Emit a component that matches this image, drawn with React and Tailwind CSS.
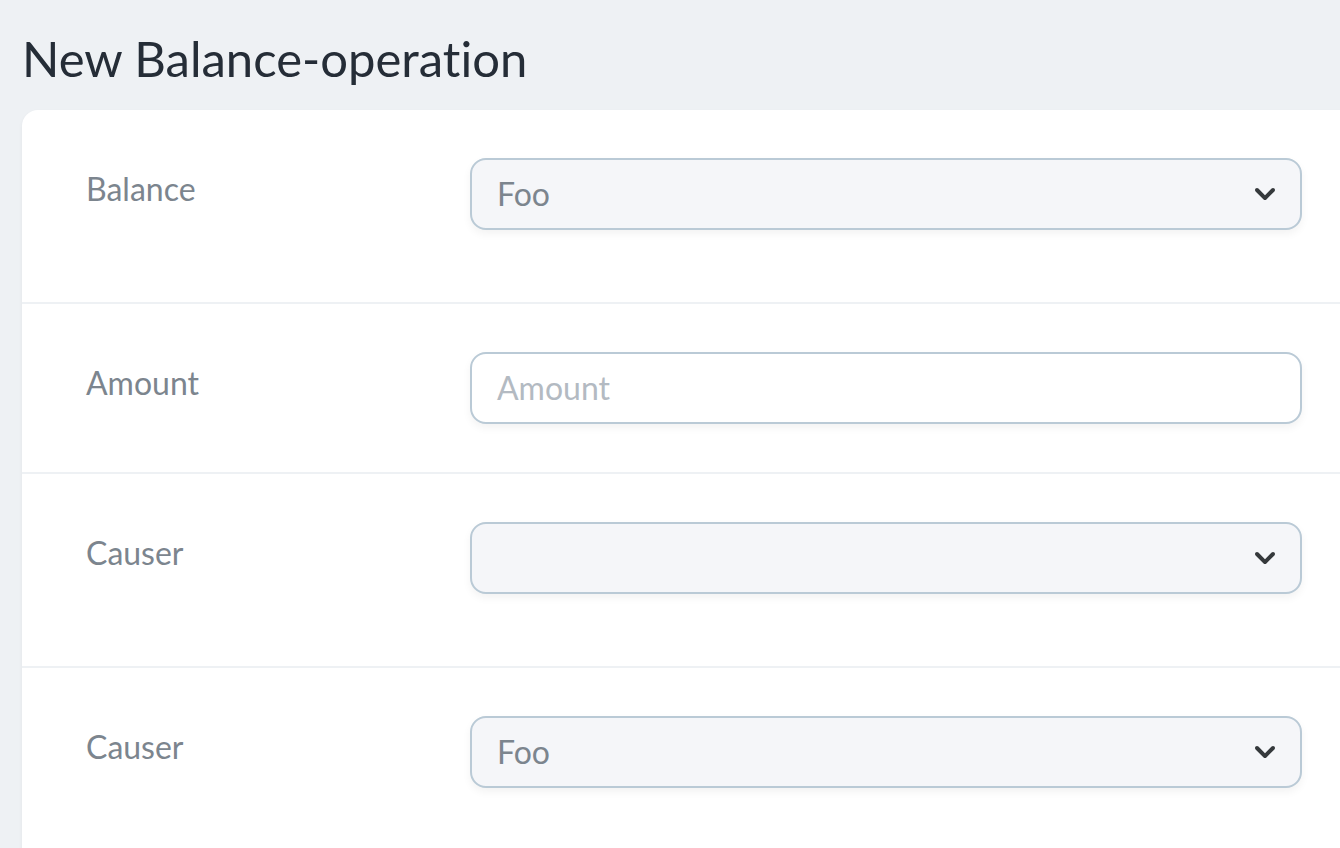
import React from "react";

const font = { fontFamily: "Lato, 'Noto Sans', sans-serif" };

function Chevron() {
  return (
    <svg width="20" height="12" viewBox="0 0 10 6" className="absolute right-[25px] top-1/2 -translate-y-1/2 text-[#35393c]">
      <path
        fill="currentColor"
        d="M8.292893.292893c.390525-.390524 1.023689-.390524 1.414214 0 .390524.390525.390524 1.023689 0 1.414214l-4 4c-.390525.390524-1.023689.390524-1.414214 0l-4-4c-.390524-.390525-.390524-1.023689 0-1.414214.390525-.390524 1.023689-.390524 1.414214 0L5 3.585786 8.292893.292893z"
      />
    </svg>
  );
}

function SelectBox({ value }) {
  return (
    <div className="relative h-[72px] w-full rounded-2xl border-2 border-[#bacad6] bg-[#f5f6f9] shadow-[0_4px_8px_rgba(0,0,0,0.05)] flex items-center pl-[25px] text-[32px] text-[#7c858e]">
      <span>{value}</span>
      <Chevron />
    </div>
  );
}

function InputBox({ placeholder }) {
  return (
    <div className="h-[72px] w-full rounded-2xl border-2 border-[#bacad6] bg-white shadow-[0_4px_8px_rgba(0,0,0,0.05)] flex items-center pl-[25px] text-[32px] text-[#b3bac2]">
      <span>{placeholder}</span>
    </div>
  );
}

function Row({ label, children, bottom, first }) {
  return (
    <div className={`flex ${first ? "" : "border-t-2 border-[#eef1f4]"}`}>
      <div className="w-[384px] px-16 pt-[59px]">
        <span className="text-[32px] leading-tight text-[#7c858e]">{label}</span>
      </div>
      <div className={`w-[960px] px-16 pt-12 ${bottom}`}>{children}</div>
    </div>
  );
}

export default function App() {
  return (
    <div className="h-[848px] w-[1340px] overflow-hidden bg-[#eef1f4] [font-variant-ligatures:none]" style={font}>
      <div className="pl-[22px] pt-[28px]">
        <h1 className="text-[49px] leading-[60px] font-normal text-[#252d37] h-[82px]">New Balance-operation</h1>
        <div className="w-[1920px] h-[800px] rounded-tl-2xl bg-white shadow-[0_2px_4px_rgba(0,0,0,0.05)]">
          <Row label="Balance" bottom="pb-[72px]" first>
            <SelectBox value="Foo" />
          </Row>
          <Row label="Amount" bottom="pb-12">
            <InputBox placeholder="Amount" />
          </Row>
          <Row label="Causer" bottom="pb-[72px]">
            <SelectBox value="" />
          </Row>
          <Row label="Causer" bottom="pb-[72px]">
            <SelectBox value="Foo" />
          </Row>
        </div>
      </div>
    </div>
  );
}
